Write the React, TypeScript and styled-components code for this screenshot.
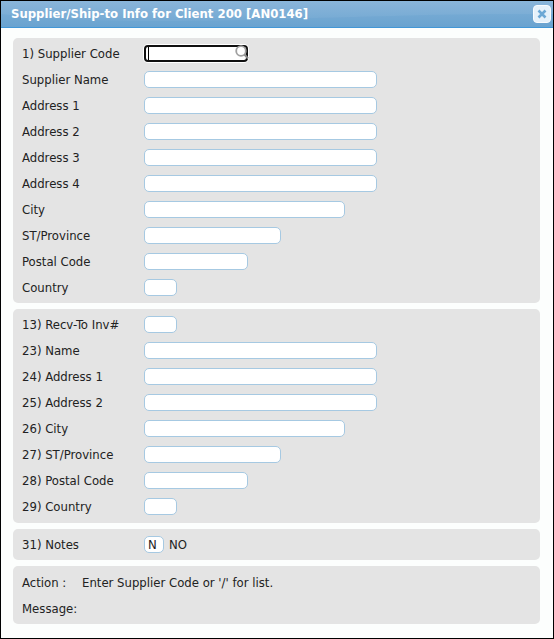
import React, { useId } from "react";
import styled, { createGlobalStyle, css } from "styled-components";

const GlobalStyle = createGlobalStyle`
  *, *::before, *::after { box-sizing: border-box; }
  body { margin: 0; }
`;

const Dialog = styled.form`
  display: flex;
  flex-direction: column;
  min-height: 100vh;
  border: 1px solid #000;
  background: #fcfefd;
  color: #222;
  font-family: "DejaVu Sans Condensed", "Noto Sans", sans-serif;
  font-size: 13px;
  line-height: 16px;
`;

const TitleBar = styled.header`
  position: relative;
  display: flex;
  align-items: center;
  justify-content: space-between;
  height: 27px;
  padding: 0 2px 0 10px;
  border-bottom: 1px solid #4297d7;
  background: linear-gradient(#8ab5da, #6ea6d1);
`;

const Gloss = styled.svg`
  position: absolute;
  inset: 0;
  width: 100%;
  height: 100%;
`;

const Title = styled.h1`
  position: relative;
  margin: 0;
  color: #fff;
  font-size: 13px;
  font-weight: 700;
  line-height: 16px;
  white-space: nowrap;
`;

const CloseButton = styled.button`
  position: relative;
  display: flex;
  align-items: center;
  justify-content: center;
  width: 18px;
  height: 18px;
  padding: 0;
  border: 1px solid #f8fbfe;
  border-radius: 4px;
  background: #e6f1fa;
`;

const Content = styled.main`
  display: flex;
  flex-direction: column;
  gap: 6px;
  padding: 10px 13px 13px 12px;
`;

const Panel = styled.section<{ $top?: number; $bottom?: number }>`
  display: flex;
  flex-direction: column;
  gap: 1px;
  padding: ${(p) => p.$top ?? 3}px 9px ${(p) => p.$bottom ?? 3}px;
  border-radius: 5px;
  background: #e4e4e4;
`;

const Row = styled.div`
  display: flex;
  align-items: center;
  height: 25px;
`;

const Label = styled.label`
  flex: 0 0 122px;
  white-space: nowrap;
`;

const InputWrap = styled.div`
  position: relative;
  display: flex;
`;

const Input = styled.input<{ $width: number; $active?: boolean }>`
  width: ${(p) => p.$width}px;
  height: 17px;
  padding: 0 3px;
  border: 1px solid #a6c9e2;
  border-radius: 5px;
  outline: none;
  background: #fff;
  color: #222;
  font: inherit;
  ${(p) =>
    p.$active &&
    css`
      border: 2px solid #101010;
      border-radius: 4px;
      box-shadow: 0 0 0 1px #fff;
    `}
`;

const Caret = styled.span`
  position: absolute;
  left: 4px;
  top: 2px;
  width: 1px;
  height: 13px;
  background: #000;
`;

const Lookup = styled.button`
  position: absolute;
  top: 0;
  right: -1px;
  display: flex;
  padding: 0;
  border: 0;
  background: none;
`;

const Description = styled.span`
  margin-left: 5px;
`;

const StatusLabel = styled.span`
  flex: 0 0 60px;
`;

type FieldProps = {
  label: string;
  width: number;
  value?: string;
  description?: string;
  lookup?: boolean;
};

function Field({ label, width, value, description, lookup }: FieldProps) {
  const id = useId();
  return (
    <Row>
      <Label htmlFor={id}>{label}</Label>
      <InputWrap>
        <Input id={id} type="text" $width={width} $active={lookup} defaultValue={value} />
        {lookup && (
          <>
            <Caret />
            <Lookup type="button" aria-label="Search suppliers">
              <svg width="14" height="16" viewBox="0 0 14 16">
                <circle cx="6" cy="6" r="4.8" fill="#fff" stroke="#a0a0a0" strokeWidth="1.8" />
                <path d="M9.5 9.5L13 13.5" stroke="#8c8c8c" strokeWidth="2" />
              </svg>
            </Lookup>
          </>
        )}
      </InputWrap>
      {description && <Description>{description}</Description>}
    </Row>
  );
}

const supplierFields: FieldProps[] = [
  { label: "1) Supplier Code", width: 104, lookup: true },
  { label: "Supplier Name", width: 233 },
  { label: "Address 1", width: 233 },
  { label: "Address 2", width: 233 },
  { label: "Address 3", width: 233 },
  { label: "Address 4", width: 233 },
  { label: "City", width: 201 },
  { label: "ST/Province", width: 137 },
  { label: "Postal Code", width: 104 },
  { label: "Country", width: 33 },
];

const receivingFields: FieldProps[] = [
  { label: "13) Recv-To Inv#", width: 33 },
  { label: "23) Name", width: 233 },
  { label: "24) Address 1", width: 233 },
  { label: "25) Address 2", width: 233 },
  { label: "26) City", width: 201 },
  { label: "27) ST/Province", width: 137 },
  { label: "28) Postal Code", width: 104 },
  { label: "29) Country", width: 33 },
];

export default function App() {
  return (
    <>
      <GlobalStyle />
      <Dialog>
        <TitleBar>
          <Gloss viewBox="0 0 552 26" preserveAspectRatio="none" aria-hidden="true">
            <path d="M0 13Q60 20 150 20C290 20 400 12 552 13V26H0Z" fill="#5c9ccc" fillOpacity="0.2" />
          </Gloss>
          <Title>Supplier/Ship-to Info for Client 200 [AN0146]</Title>
          <CloseButton type="button" aria-label="Close">
            <svg width="10" height="10" viewBox="0 0 10 10">
              <path d="M1.5 1.5L8.5 8.5M8.5 1.5L1.5 8.5" stroke="#6da8d5" strokeWidth="2.6" />
            </svg>
          </CloseButton>
        </TitleBar>
        <Content>
          <Panel>
            {supplierFields.map((field) => (
              <Field key={field.label} {...field} />
            ))}
          </Panel>
          <Panel $bottom={4}>
            {receivingFields.map((field) => (
              <Field key={field.label} {...field} />
            ))}
          </Panel>
          <Panel>
            <Field label="31) Notes" width={20} value="N" description="NO" />
          </Panel>
          <Panel $top={4}>
            <Row>
              <StatusLabel>Action :</StatusLabel>
              <span>Enter Supplier Code or '/' for list.</span>
            </Row>
            <Row>
              <StatusLabel>Message:</StatusLabel>
            </Row>
          </Panel>
        </Content>
      </Dialog>
    </>
  );
}
